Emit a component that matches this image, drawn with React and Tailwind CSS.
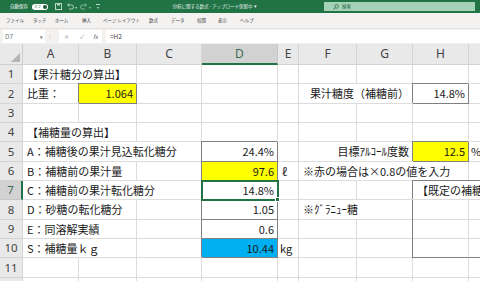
import React from 'react';

const JP = "font-['Noto_Sans_CJK_JP',sans-serif]";
const cols = ['A', 'B', 'C', 'D', 'E', 'F', 'G', 'H', 'I'];
const E = {};

const rows = [
  [{ span: 2, t: '【果汁糖分の算出】' }, E, E, E, E, E, E, E],
  [{ t: '比重：' }, { t: '1.064', r: true, box: true, fill: 'yellow' }, E, E, E, { span: 2, t: '果汁糖度（補糖前）', r: true }, { t: '14.8%', r: true, box: true }, E],
  [E, E, E, E, E, E, E, E, E],
  [{ span: 2, t: '【補糖量の算出】' }, E, E, E, E, E, E, E],
  [{ span: 3, t: 'A：補糖後の果汁見込転化糖分' }, { t: '24.4%', r: true, box: true }, E, { span: 2, t: '目標ｱﾙｺｰﾙ度数', r: true }, { t: '12.5', r: true, box: true, fill: 'yellow' }, { t: '%', pl: 'pl-[2px]' }],
  [{ span: 2, t: 'B：補糖前の果汁量' }, E, { t: '97.6', r: true, box: true, fill: 'yellow' }, { t: 'ℓ', pl: 'pl-[4px]' }, { span: 3, t: '※赤の場合は×0.8の値を入力' }, E],
  [{ span: 3, t: 'C：補糖前の果汁転化糖分' }, { t: '14.8%', r: true, sel: true }, E, E, E, { span: 2, t: '【既定の補糖量】', frame: 'top' }],
  [{ span: 2, t: 'D：砂糖の転化糖分' }, E, { t: '1.05', r: true, box: true }, E, { span: 2, t: '※ｸﾞﾗﾆｭｰ糖' }, { frame: 'left' }, E],
  [{ span: 2, t: 'E：同溶解実績' }, E, { t: '0.6', r: true, box: true }, E, E, E, { frame: 'left' }, E],
  [{ span: 2, t: 'S：補糖量ｋｇ' }, E, { t: '10.44', r: true, box: true, fill: 'blue' }, { t: 'kg', pl: 'pl-[2px]' }, E, E, { frame: 'bottomLeft' }, { frame: 'bottom' }],
  [E, E, E, E, E, E, E, E, E],
  [E, E, E, E, E, E, E, E, E],
];

function cellClass(c) {
  const span = { 1: '', 2: 'col-span-2', 3: 'col-span-3' }[c.span || 1];
  let rc = 'border-r-[#dcdcdc]';
  let bc = 'border-b-[#dcdcdc]';
  let extra = '';
  if (c.box) {
    rc = 'border-r-[#808080]';
    bc = 'border-b-[#808080]';
    extra = 'shadow-[-1px_-1px_0_0_#808080]';
  }
  if (c.sel) {
    rc = 'border-r-[#217346]';
    bc = 'border-b-[#217346]';
    extra = 'relative z-10 shadow-[0_0_0_1px_#217346,inset_1px_1px_0_0_#217346]';
  }
  if (c.frame === 'top') extra = 'shadow-[-1px_-1px_0_0_#808080]';
  if (c.frame === 'left') extra = 'shadow-[-1px_0_0_0_#808080]';
  if (c.frame === 'bottomLeft') {
    extra = 'shadow-[-1px_0_0_0_#808080]';
    bc = 'border-b-[#808080]';
  }
  if (c.frame === 'bottom') bc = 'border-b-[#808080]';
  const fill = c.fill === 'yellow' ? 'bg-[#ffff00]' : c.fill === 'blue' ? 'bg-[#00b0f0]' : '';
  const align = c.r ? 'justify-end pr-[3px]' : c.pl || 'pl-[4px]';
  return `${span} ${rc} ${bc} ${extra} ${fill} ${align} border-r border-b flex items-center whitespace-nowrap text-[11px] leading-none text-[#1a1a1a]`;
}

const menu = [
  ['ファイル', 'w-[27px]'],
  ['タッチ', 'w-[22px]'],
  ['ホーム', 'w-[27px]'],
  ['挿入', 'w-[21px]'],
  ['ページ レイアウト', 'w-[46px]'],
  ['数式', 'w-[22px]'],
  ['データ', 'w-[26px]'],
  ['校閲', 'w-[21px]'],
  ['表示', 'w-[22px]'],
  ['ヘルプ', 'w-[24px]'],
];

const App = () => {
  return (
    <div className={`w-[480px] h-[281px] overflow-hidden bg-white ${JP}`}>
      {/* title bar */}
      <div className="h-[13px] bg-[#217346] flex items-center text-white">
        <div className="w-[105px] flex items-center pl-[10px]">
          <span className="text-[4.5px] leading-none">自動保存</span>
          <span className="ml-[4px] w-[16px] h-[6px] rounded-full bg-white flex items-center justify-between pl-[2px] pr-[1px]">
            <span className="text-[3.5px] leading-none text-[#217346]">オフ</span>
            <span className="w-[4px] h-[4px] rounded-full bg-[#1d5c39]" />
          </span>
          <svg className="ml-[7px]" width="7" height="7" viewBox="0 0 7 7">
            <rect x="0.5" y="0.5" width="6" height="6" fill="none" stroke="#b9d9c5" strokeWidth="1" />
            <rect x="2" y="0.5" width="3" height="2" fill="#b9d9c5" />
          </svg>
          <svg className="ml-[4px]" width="8" height="7" viewBox="0 0 8 7">
            <path d="M2 2 H5.5 A2 2 0 0 1 5.5 6 H3" fill="none" stroke="#b9d9c5" strokeWidth="0.9" />
            <path d="M3.2 0.6 L1.5 2 L3.2 3.4" fill="none" stroke="#b9d9c5" strokeWidth="0.9" />
          </svg>
          <span className="ml-[1px] text-[4px] leading-none text-[#b9d9c5]">▾</span>
          <svg className="ml-[3px]" width="8" height="7" viewBox="0 0 8 7">
            <path d="M6 2 H2.5 A2 2 0 0 0 2.5 6 H5" fill="none" stroke="#8fbfa2" strokeWidth="0.9" />
            <path d="M4.8 0.6 L6.5 2 L4.8 3.4" fill="none" stroke="#8fbfa2" strokeWidth="0.9" />
          </svg>
          <span className="ml-[1px] text-[4px] leading-none text-[#8fbfa2]">▾</span>
          <span className="ml-[5px] flex flex-col items-center gap-[1px]">
            <span className="w-[4px] h-px bg-[#b9d9c5]" />
            <span className="text-[3.5px] leading-none text-[#b9d9c5]">▾</span>
          </span>
        </div>
        <div className="w-[219px] text-center text-[4.5px] leading-none text-[#e6f1ea]">
          分析に関する数式 - アップロード保留中 ▾
        </div>
        <div className="w-[151px] h-[9px] bg-[#a3d2b6] flex items-center pl-[9px] gap-[3px]">
          <svg width="6" height="6" viewBox="0 0 6 6">
            <circle cx="3.6" cy="2.4" r="1.8" fill="none" stroke="#1e5c3a" strokeWidth="0.7" />
            <path d="M2.3 3.7 L0.5 5.5" stroke="#1e5c3a" strokeWidth="0.8" />
          </svg>
          <span className="text-[4.5px] leading-none text-[#235e3e]">検索</span>
        </div>
      </div>

      {/* menu */}
      <div className="h-[15px] bg-[#f3f2f1] flex items-center pl-[6px] text-[4.5px] leading-none text-[#444]">
        {menu.map(([label, w]) => (
          <span key={label} className={w}>{label}</span>
        ))}
      </div>

      {/* formula bar */}
      <div className="h-[16px] bg-[#f3f2f1] border-t border-[#e1dfdd] flex items-center pl-[3px] text-[#555]">
        <div className="w-[42px] h-[13px] bg-white flex items-center justify-between px-[2px]">
          <span className="text-[6.5px] leading-none text-[#777]">D7</span>
          <span className="text-[5px] leading-none text-[#666]">▾</span>
        </div>
        <span className="ml-[4px] w-[10px] text-[6px] leading-none text-[#aaa]">⁝</span>
        <div className="w-[43px] h-[13px] bg-white flex items-center pl-[5px] text-[6px] leading-none">
          <span className="w-[16px] text-[#aaa]">✕</span>
          <span className="w-[13px] text-[#aaa]">✓</span>
          <span className="italic text-[#666]">fx</span>
        </div>
        <div className="ml-[4px] flex-1 h-[13px] bg-white flex items-center pl-[4px]">
          <span className="text-[6.5px] leading-none text-[#444]">=H2</span>
        </div>
      </div>

      {/* sheet */}
      <div className="grid grid-cols-[23px_56px_58px_65px_76px_21px_58px_56px_56px_1fr] grid-rows-[21px_19px_20px_19px_19px_20px_19px_19px_20px_19px_19px_20px_19px]">
        <div className="bg-[#e9e9e9] border-r border-b border-[#cfcfcf] flex items-end justify-end p-[2px]">
          <svg width="9" height="9" viewBox="0 0 9 9">
            <polygon points="9,0 9,9 0,9" fill="#b4b4b4" />
          </svg>
        </div>
        {cols.map((c) =>
          c === 'D' ? (
            <div
              key={c}
              className="bg-[#d2d2d2] border-r border-[#c6c6c6] border-b-2 border-b-[#217346] flex items-center justify-center font-['Noto_Sans',sans-serif] text-[12px] text-[#3f6b52]"
            >
              {c}
            </div>
          ) : c === 'I' ? (
            <div key={c} className="bg-[#e9e9e9] border-b border-[#d4d4d4] overflow-hidden flex items-center">
              <span className="w-[56px] shrink-0 text-center font-['Noto_Sans',sans-serif] text-[12px] text-[#444]">{c}</span>
            </div>
          ) : (
            <div
              key={c}
              className="bg-[#e9e9e9] border-r border-b border-[#d4d4d4] flex items-center justify-center font-['Noto_Sans',sans-serif] text-[12px] text-[#444]"
            >
              {c}
            </div>
          )
        )}
        {rows.map((row, i) => (
          <React.Fragment key={i}>
            {i === 6 ? (
              <div className="bg-[#d2d2d2] border-b border-b-[#c6c6c6] border-r-2 border-r-[#217346] flex items-center justify-center font-['Noto_Sans',sans-serif] text-[11.5px] text-[#3f6b52]">
                {i + 1}
              </div>
            ) : (
              <div className="bg-[#e9e9e9] border-r border-b border-[#d4d4d4] flex items-center justify-center font-['Noto_Sans',sans-serif] text-[11.5px] text-[#444]">
                {i < 11 ? i + 1 : ''}
              </div>
            )}
            {row.map((c, j) => (
              <div key={j} className={cellClass(c)}>
                {c.t}
                {c.sel && (
                  <span className="absolute -right-[3px] -bottom-[3px] w-[5px] h-[5px] bg-[#217346] border border-white" />
                )}
              </div>
            ))}
          </React.Fragment>
        ))}
      </div>
    </div>
  );
};

export default App;
